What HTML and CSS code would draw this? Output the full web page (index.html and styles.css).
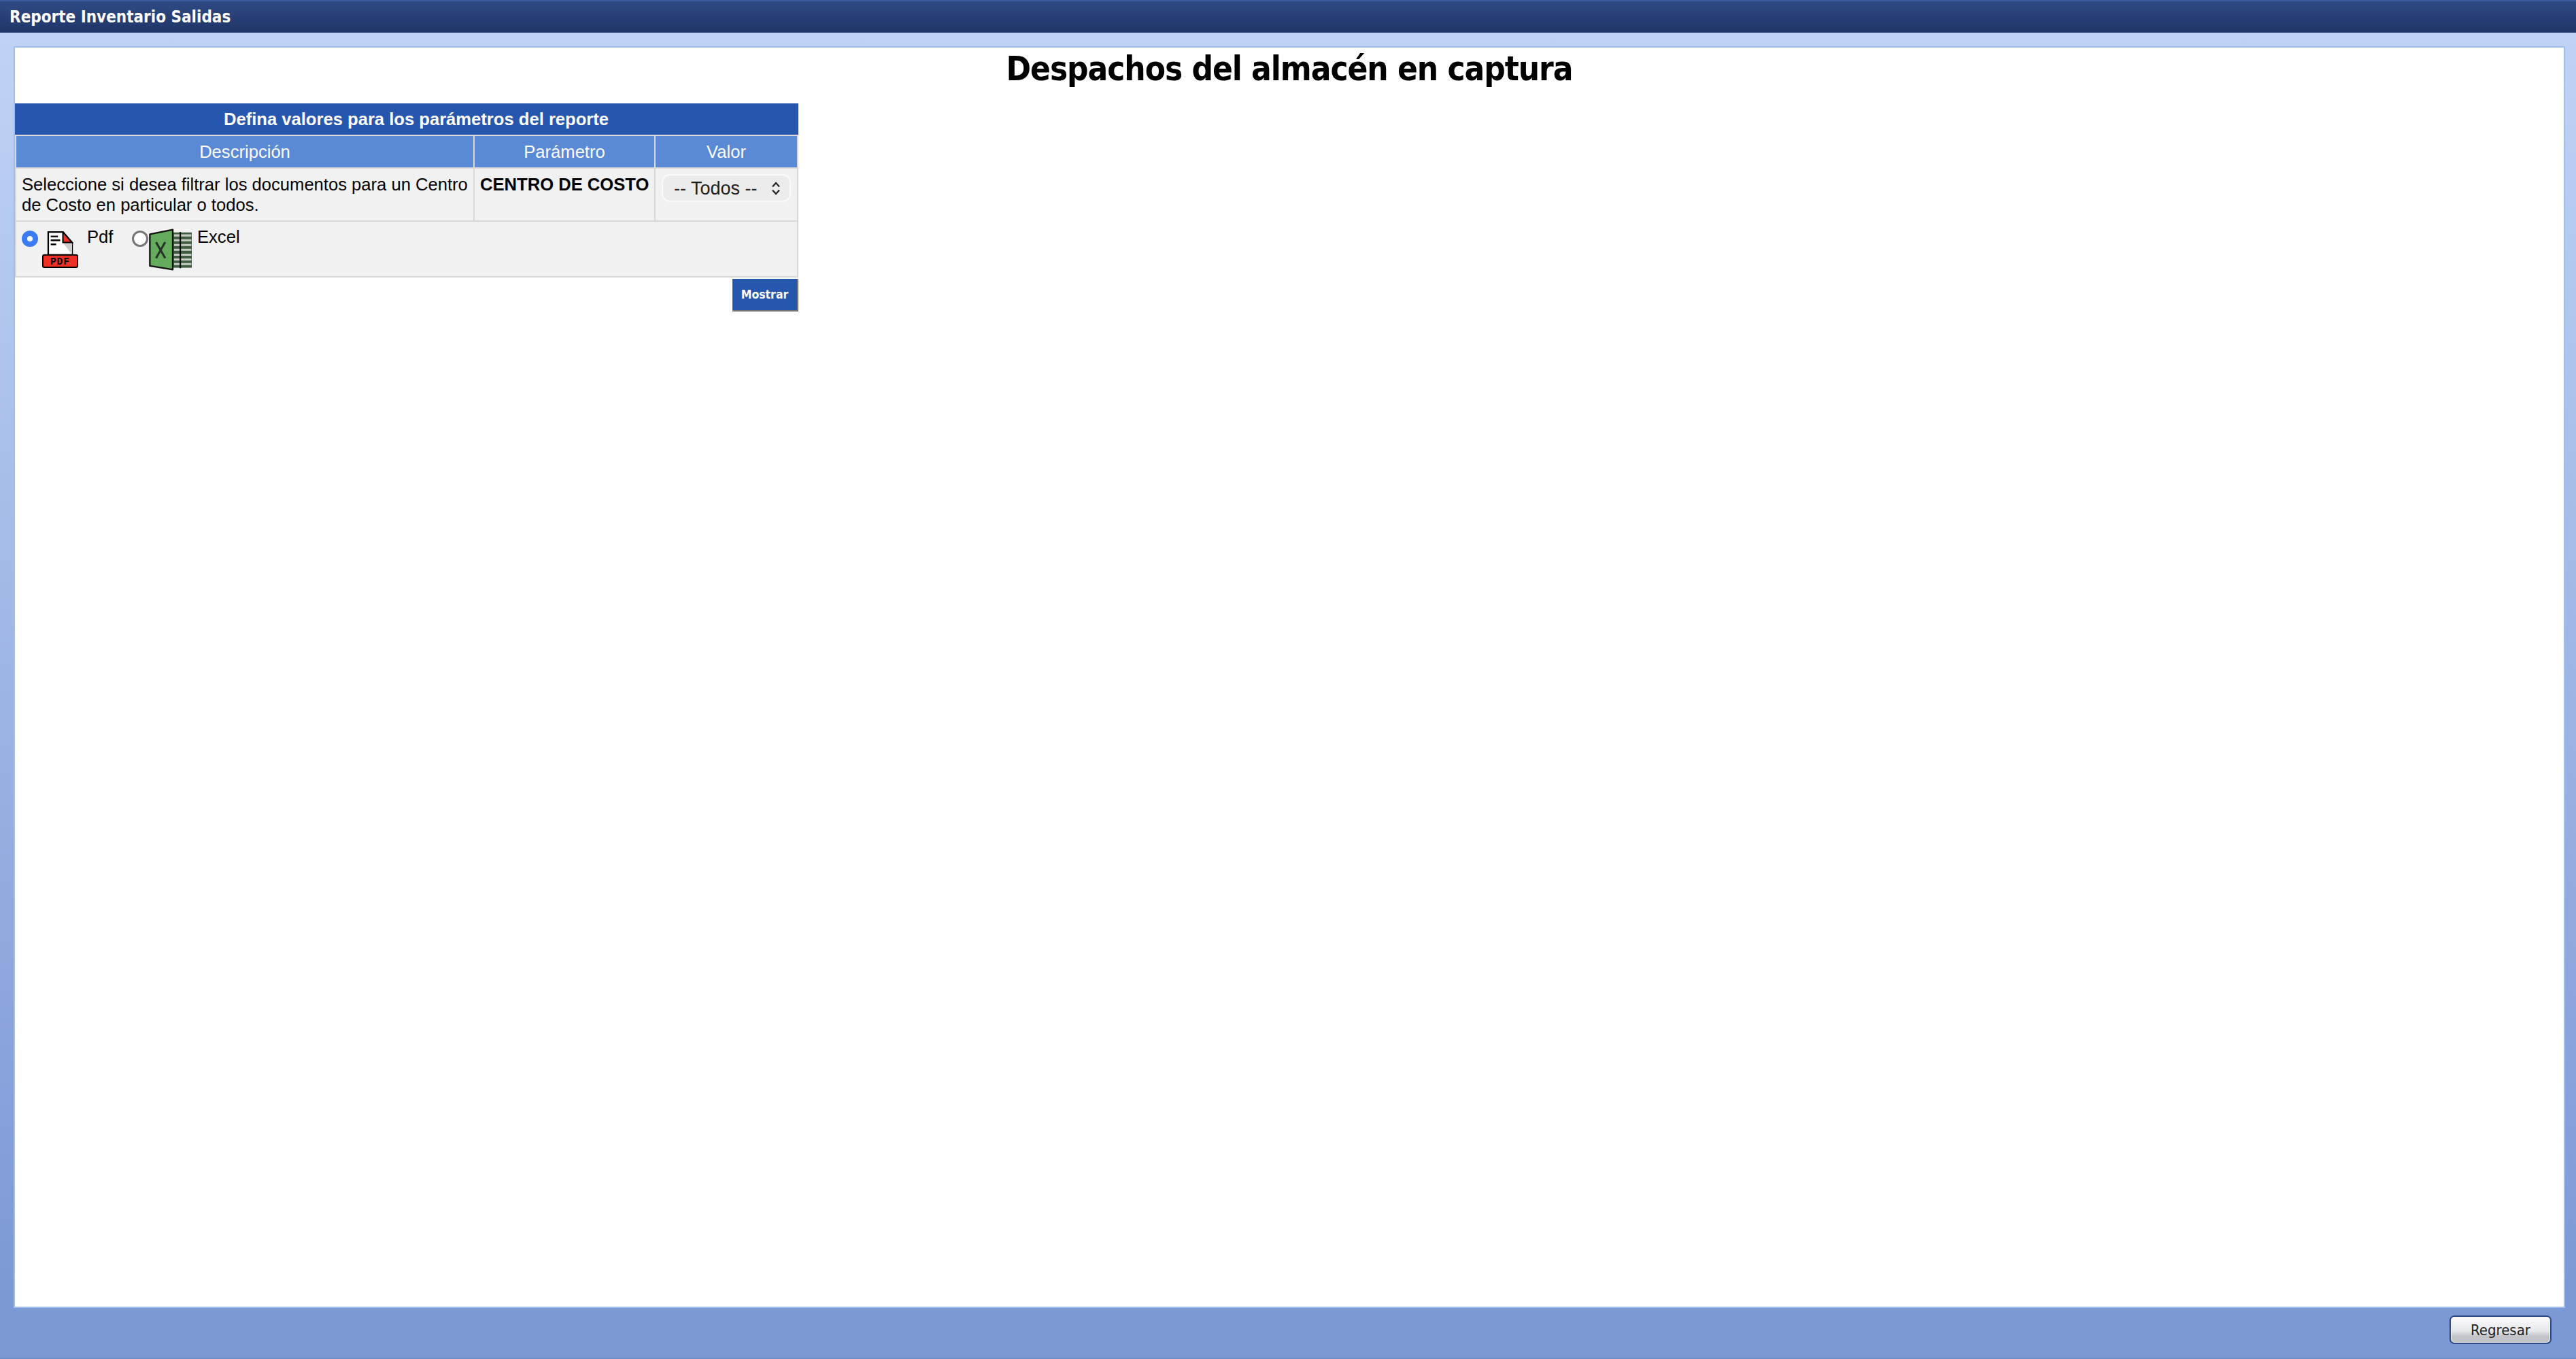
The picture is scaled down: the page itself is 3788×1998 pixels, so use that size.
FILE: index.html
```html
<!DOCTYPE html>
<html lang="es">
<head>
<meta charset="utf-8">
<title>Reporte Inventario Salidas</title>
<link rel="stylesheet" href="styles.css">
</head>
<body>
<header class="topbar">Reporte Inventario Salidas</header>
<main class="main">
  <section class="panel">
    <h1 class="title">Despachos del almacén en captura</h1>
    <form class="params">
      <table class="ptable">
        <caption class="pcaption">Defina valores para los parámetros del reporte</caption>
        <colgroup><col class="c1"><col class="c2"><col class="c3"></colgroup>
        <thead>
          <tr><th>Descripción</th><th>Parámetro</th><th>Valor</th></tr>
        </thead>
        <tbody>
          <tr class="prow">
            <td>Seleccione si desea filtrar los documentos para un Centro de Costo en particular o todos.</td>
            <td class="pname">CENTRO DE COSTO</td>
            <td class="pval">
              <div class="selwrap">
                <select class="sel"><option>-- Todos --</option></select>
                <svg class="chev" viewBox="0 0 14 20" width="14" height="20"><path d="M2 7.5 7 2l5 5.5M2 12.5 7 18l5-5.5" fill="none" stroke="#222" stroke-width="2.2"/></svg>
              </div>
            </td>
          </tr>
          <tr class="frow">
            <td colspan="3">
              <div class="formats">
                <input class="radio" type="radio" name="fmt" checked>
                <svg class="ipdf" viewBox="0 0 160 163" width="53" height="54">
                  <path d="M27 105V3h65l41 47v55z" fill="#fff" stroke="#000" stroke-width="7"/>
                  <path d="M92 50h41v55L92 50z" fill="#cfcfcf"/>
                  <path d="M92 3l41 47H92z" fill="#ee3124" stroke="#000" stroke-width="6"/>
                  <path d="M38 23h32M38 40h42M38 58h24" stroke="#000" stroke-width="7"/>
                  <rect x="3" y="105" width="154" height="55" rx="7" fill="#ee3124" stroke="#000" stroke-width="6"/>
                  <text x="80" y="148" class="ipdf-t" text-anchor="middle">PDF</text>
                </svg>
                <span class="ftext t-pdf">Pdf</span>
                <input class="radio r2" type="radio" name="fmt">
                <svg class="ixls" viewBox="0 0 190 190" width="64" height="64">
                  <rect x="110" y="20" width="80" height="154" fill="#3f5b40"/>
                  <path d="M112 33h76M112 54h76M112 75h76M112 96h76M112 117h76M112 138h76M112 158h76" stroke="#c5cdc3" stroke-width="9"/>
                  <path d="M140 18v158" stroke="#000" stroke-width="6"/>
                  <path d="M7 28 107 8v174L7 166z" fill="#65ab5e" stroke="#111" stroke-width="7" stroke-linejoin="round"/>
                  <path d="M34 62l40 70M74 62l-40 70" stroke="#26332a" stroke-width="9"/>
                </svg>
                <span class="ftext t-xls">Excel</span>
              </div>
            </td>
          </tr>
        </tbody>
      </table>
      <div class="actions"><button type="button" class="show">Mostrar</button></div>
    </form>
  </section>
</main>
<footer class="bottombar"><button type="button" class="back">Regresar</button></footer>
</body>
</html>
```
FILE: styles.css
```css
* { box-sizing: border-box; }
html, body { height: 100%; }
body {
  margin: 0;
  height: 1998px;
  display: flex;
  flex-direction: column;
  background: linear-gradient(180deg, #bfd3f4 48px, #7d99d5 1900px);
  font-family: "Liberation Sans", Arial, sans-serif;
  overflow: hidden;
}
.topbar {
  height: 48px;
  padding: 2px 0 0 14px;
  border-top: 2px solid #3a5a9e;
  background: linear-gradient(180deg, #2f4a84, #1f3567);
  color: #fff;
  font: bold 24px/42px "DejaVu Sans", Verdana, sans-serif;
  font-stretch: condensed;
  flex: none;
}
.main {
  flex: 1;
  display: flex;
  padding: 20px 16px 0 20px;
  min-height: 0;
}
.panel {
  flex: 1;
  background: #fff;
  border: 2px solid #a0bdee;
}
.title {
  margin: 0;
  height: 82px;
  text-align: center;
  color: #000;
  font: bold 49px/64px "DejaVu Sans", Verdana, sans-serif;
  font-stretch: condensed;
  letter-spacing: -1.05px;
}
.params { width: 1152px; }
.ptable {
  width: 1152px;
  table-layout: fixed;
  border-collapse: separate;
  border-spacing: 2px;
  background: #d9d9d9;
  font-size: 25.6px;
  color: #000;
}
.pcaption {
  height: 46px;
  padding-left: 28px;
  background: #2756ae;
  color: #fff;
  font: bold 25.6px/46px "Liberation Sans", Arial, sans-serif;
}
.c1 { width: 672px; }
.c2 { width: 264px; }
.c3 { width: 208px; }
th {
  height: 46px;
  padding: 0;
  background: #5a8ad6;
  color: #fff;
  font-weight: normal;
  font-size: 25.6px;
}
td {
  background: #f1f1f1;
  padding: 8px 4px 8px 8px;
  vertical-align: top;
  line-height: 30px;
}
.prow td { height: 75px; }
.pname { font-weight: bold; }
.pval { padding: 8px 9px 0 9px; }
.selwrap { position: relative; width: 190px; }
.sel {
  appearance: none;
  -webkit-appearance: none;
  display: block;
  width: 190px;
  height: 41px;
  padding: 0 0 0 16px;
  border: 2px solid #fafafa;
  border-radius: 12px;
  background: #ececec;
  color: #222;
  font: 27px "Liberation Sans", Arial, sans-serif;
}
.chev { position: absolute; top: 11px; right: 15px; pointer-events: none; }
.frow td { height: 80px; padding: 0 8px; }
.formats { display: flex; align-items: flex-start; }
.radio {
  appearance: none;
  -webkit-appearance: none;
  flex: none;
  width: 24px;
  height: 24px;
  margin: 13px 0 0;
  border-radius: 50%;
  border: 3px solid #777;
  background: #fff;
}
.radio:checked {
  border: 8px solid #3b7cf6;
}
.ipdf { flex: none; margin: 14px 0 0 6px; }
.ipdf-t { font: bold 44px "Liberation Mono", monospace; fill: #000; letter-spacing: 3px; }
.ixls { flex: none; margin: 9px 0 0 0; }
.ftext { line-height: 30px; margin-top: 7px; }
.t-pdf { margin-left: 13px; width: 66px; }
.t-xls { margin-left: 8px; }
.actions { display: flex; justify-content: flex-end; }
.show {
  width: 97px;
  height: 48px;
  margin-top: 2px;
  padding: 0;
  border: 0;
  border-right: 2px solid #777;
  border-bottom: 2px solid #777;
  background: #2756ae;
  color: #fff;
  font: bold 17.5px "DejaVu Sans", Verdana, sans-serif;
  font-stretch: condensed;
}
.bottombar {
  flex: none;
  height: 75px;
  padding: 11px 36px 0 0;
  display: flex;
  justify-content: flex-end;
  align-items: flex-start;
  border-bottom: 2px solid #7090cc;
  background: #7d99d5;
}
.back {
  width: 150px;
  height: 42px;
  padding: 0;
  border: 2px solid #2d4a85;
  border-radius: 7px;
  box-shadow: inset 0 0 0 1px #f5f5f0;
  background: linear-gradient(180deg, #fbfbfc, #e6e7ea 55%, #c3c4c9 75%, #c3c4c9);
  color: #222;
  font: 22px "DejaVu Sans", Verdana, sans-serif;
  font-stretch: condensed;
}
```
